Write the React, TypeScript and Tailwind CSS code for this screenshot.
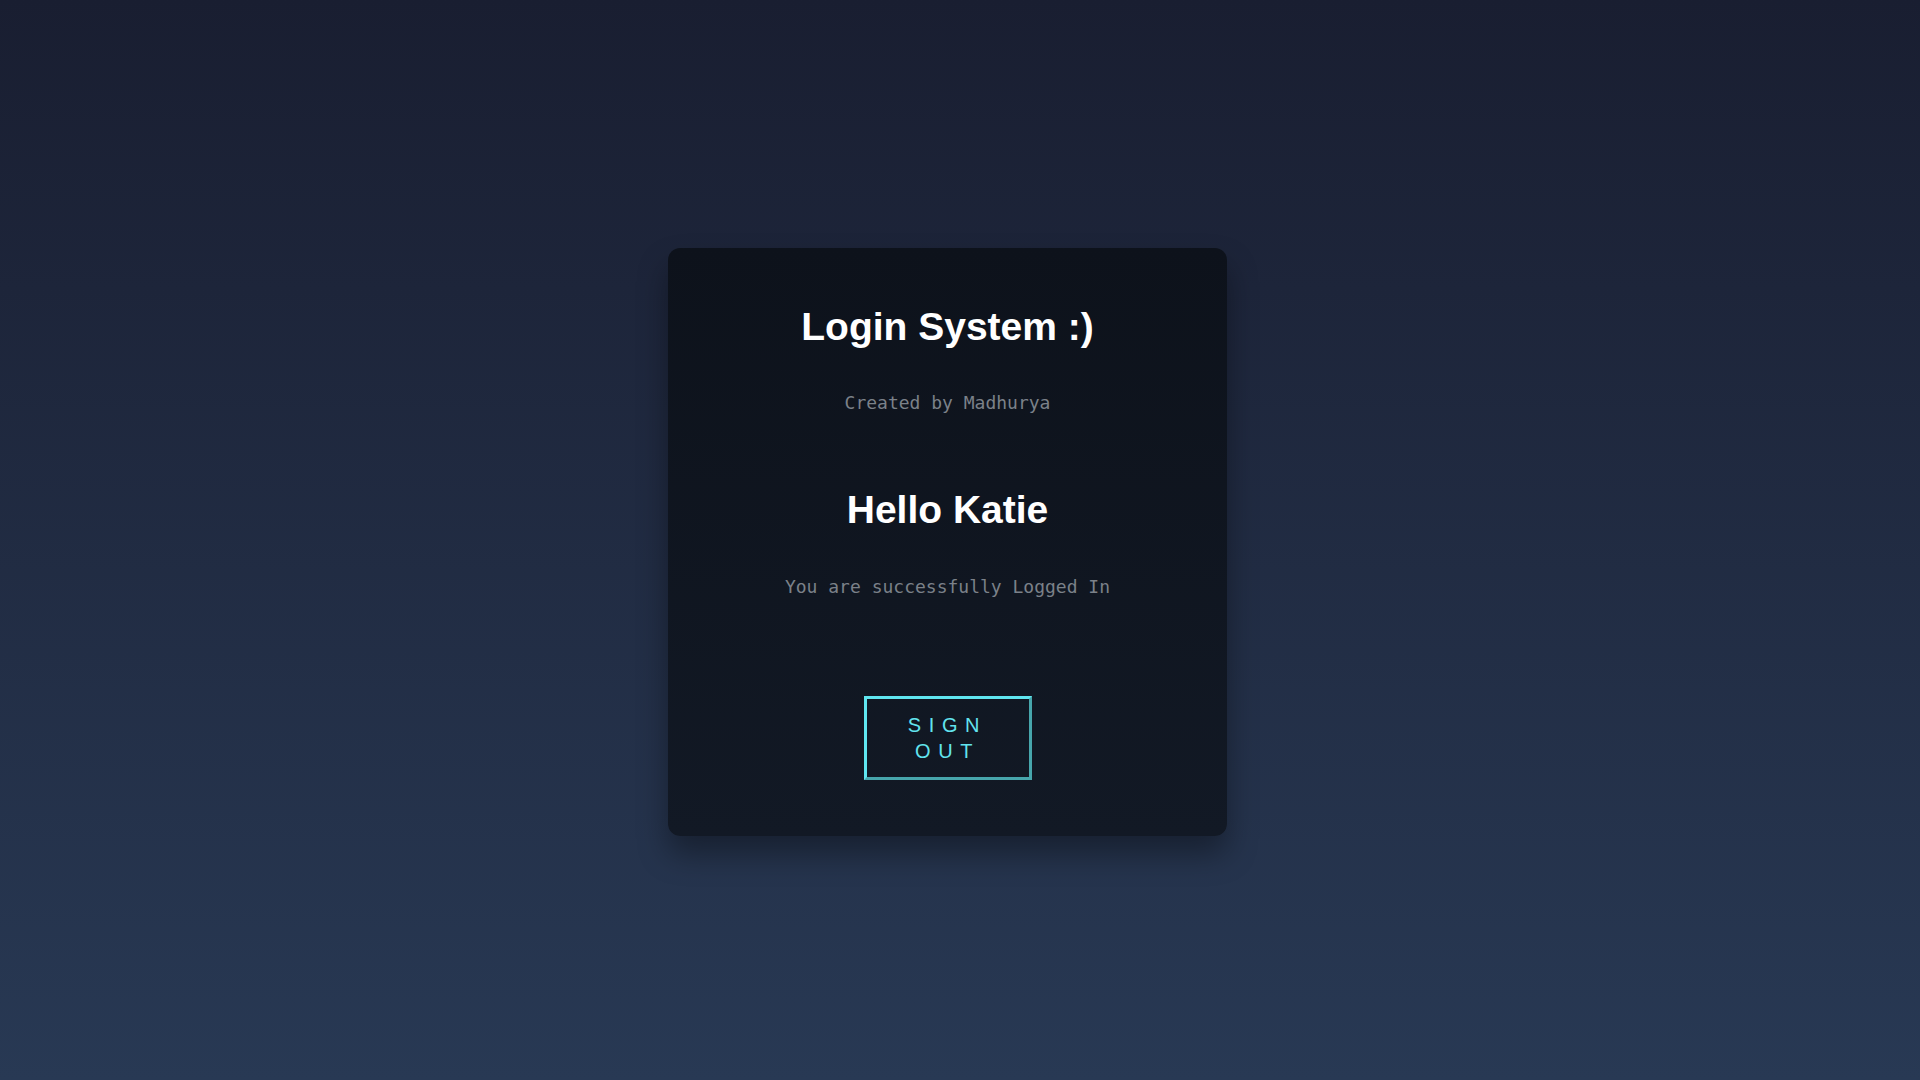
import React from 'react';

const user = { name: 'Katie' };

export default function App() {
  return (
    <main className="min-h-screen w-full bg-gradient-to-b from-[#191e31] to-[#283954] flex justify-center items-start pt-[248px] pr-[25px]">
      <div className="w-[559px] rounded-xl bg-gradient-to-b from-[#0d121b] to-[#121925] shadow-[0_18px_30px_rgba(0,0,0,0.35)] pt-[55px] pb-[56px] flex flex-col items-center text-center">
        <h1 className="text-[39px] leading-[48px] font-bold text-white font-['Liberation_Sans',Arial,sans-serif]">
          Login System :)
        </h1>
        <p className="mt-[40px] text-[18px] leading-[24px] text-[#7b8189] font-['DejaVu_Sans_Mono',monospace]">
          Created by Madhurya
        </p>

        <h2 className="mt-[71px] text-[39px] leading-[48px] font-bold text-white font-['Liberation_Sans',Arial,sans-serif]">
          Hello {user.name}
        </h2>
        <p className="mt-[41px] text-[18px] leading-[24px] text-[#7b8189] font-['DejaVu_Sans_Mono',monospace]">
          You are successfully Logged In
        </p>

        <button className="mt-[97px] w-[168px] px-[30px] py-[13px] border-[3px] border-t-[#5fe6f0] border-l-[#5fe6f0] border-b-[#47a6ac] border-r-[#47a6ac] bg-transparent text-[#62e4ee] text-[20px] leading-[26px] tracking-[0.38em] uppercase font-['Liberation_Sans',Arial,sans-serif]">
          Sign Out
        </button>
      </div>
    </main>
  );
}
